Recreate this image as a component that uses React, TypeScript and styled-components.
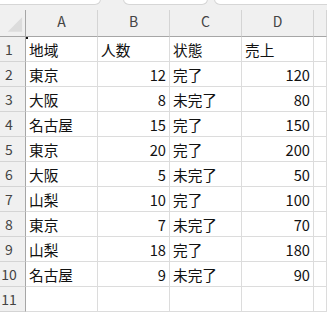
import styled, { createGlobalStyle } from "styled-components";

const GlobalStyle = createGlobalStyle`
  html, body {
    margin: 0;
    padding: 0;
    background: #fff;
    overflow: hidden;
  }
  * {
    box-sizing: border-box;
  }
`;

type RowType = {
  region: string;
  people: number;
  status: string;
  sales: number;
};

const rows: RowType[] = [
  { region: "東京", people: 12, status: "完了", sales: 120 },
  { region: "大阪", people: 8, status: "未完了", sales: 80 },
  { region: "名古屋", people: 15, status: "完了", sales: 150 },
  { region: "東京", people: 20, status: "完了", sales: 200 },
  { region: "大阪", people: 5, status: "未完了", sales: 50 },
  { region: "山梨", people: 10, status: "完了", sales: 100 },
  { region: "東京", people: 7, status: "未完了", sales: 70 },
  { region: "山梨", people: 18, status: "完了", sales: 180 },
  { region: "名古屋", people: 9, status: "未完了", sales: 90 },
];

const columns = ["A", "B", "C", "D", ""];

const App: React.FC = () => {
  return (
    <Wrapper>
      <GlobalStyle />
      <TabStrip>
        <Tab $width={112} $offset={-11} />
        <Tab $width={85} $offset={22} />
        <Tab $width={130} $offset={6} />
      </TabStrip>
      <Sheet>
        <Corner>
          <svg width="26" height="27" viewBox="0 0 26 27">
            <polygon points="23,7 23,22 8,22" fill="#dcdcdc" />
          </svg>
        </Corner>
        {columns.map((c, i) => (
          <ColHeader key={i}>{c}</ColHeader>
        ))}

        <RowHeader>1</RowHeader>
        <Cell>
          <Cursor />
          地域
        </Cell>
        <Cell>人数</Cell>
        <Cell>状態</Cell>
        <Cell>売上</Cell>
        <Cell />

        {rows.map((r, i) => (
          <Row key={i} num={i + 2} data={r} />
        ))}

        <RowHeader>11</RowHeader>
        <Cell />
        <Cell />
        <Cell />
        <Cell />
        <Cell />
      </Sheet>
    </Wrapper>
  );
};
export default App;

const Row: React.FC<{ num: number; data: RowType }> = ({ num, data }) => (
  <>
    <RowHeader>{num}</RowHeader>
    <Cell>{data.region}</Cell>
    <Cell $right>{data.people}</Cell>
    <Cell>{data.status}</Cell>
    <Cell $right>{data.sales}</Cell>
    <Cell />
  </>
);

const Wrapper = styled.div`
  width: 327px;
  height: 315px;
  overflow: hidden;
  background: #fff;
  font-family: "Noto Sans CJK JP", "Noto Sans", sans-serif;
`;

const TabStrip = styled.div`
  height: 10px;
  background: #f0f0f0;
  display: flex;
  align-items: flex-start;
  overflow: hidden;
`;

const Tab = styled.div<{ $width: number; $offset: number }>`
  flex: none;
  width: ${(p) => p.$width}px;
  margin-left: ${(p) => p.$offset}px;
  height: 6px;
  margin-top: -1px;
  background: #fff;
  border: 1px solid #d6d6d6;
  border-radius: 0 0 6px 6px;
`;

const Sheet = styled.div`
  display: grid;
  grid-template-columns: 26px 72px 72px 72px 72px 1fr;
  grid-template-rows: 27px;
  grid-auto-rows: 25px;
`;

const Corner = styled.div`
  background: #f0f0f0;
  border-right: 1px solid #a6a6a6;
  border-bottom: 1px solid #a6a6a6;
  display: flex;
  svg {
    display: block;
  }
`;

const ColHeader = styled.div`
  background: #f0f0f0;
  border-right: 1px solid #d4d4d4;
  border-bottom: 1px solid #a6a6a6;
  color: #444;
  font-size: 14px;
  display: flex;
  align-items: center;
  justify-content: center;
  padding-bottom: 5px;
`;

const RowHeader = styled.div`
  background: #f0f0f0;
  border-right: 1px solid #a6a6a6;
  border-bottom: 1px solid #d4d4d4;
  color: #444;
  font-size: 14px;
  display: flex;
  align-items: center;
  justify-content: center;
  padding-right: 7px;
`;

const Cell = styled.div<{ $right?: boolean }>`
  position: relative;
  border-right: 1px solid #dcdcdc;
  border-bottom: 1px solid #dcdcdc;
  color: #111;
  font-size: 14.67px;
  display: flex;
  align-items: center;
  justify-content: ${(p) => (p.$right ? "flex-end" : "flex-start")};
  padding: 1px 3px 0 3px;
  white-space: nowrap;
  overflow: hidden;
`;

const Cursor = styled.span`
  position: absolute;
  left: 0;
  top: 0;
  width: 2px;
  height: 2px;
  background: #111;
`;
